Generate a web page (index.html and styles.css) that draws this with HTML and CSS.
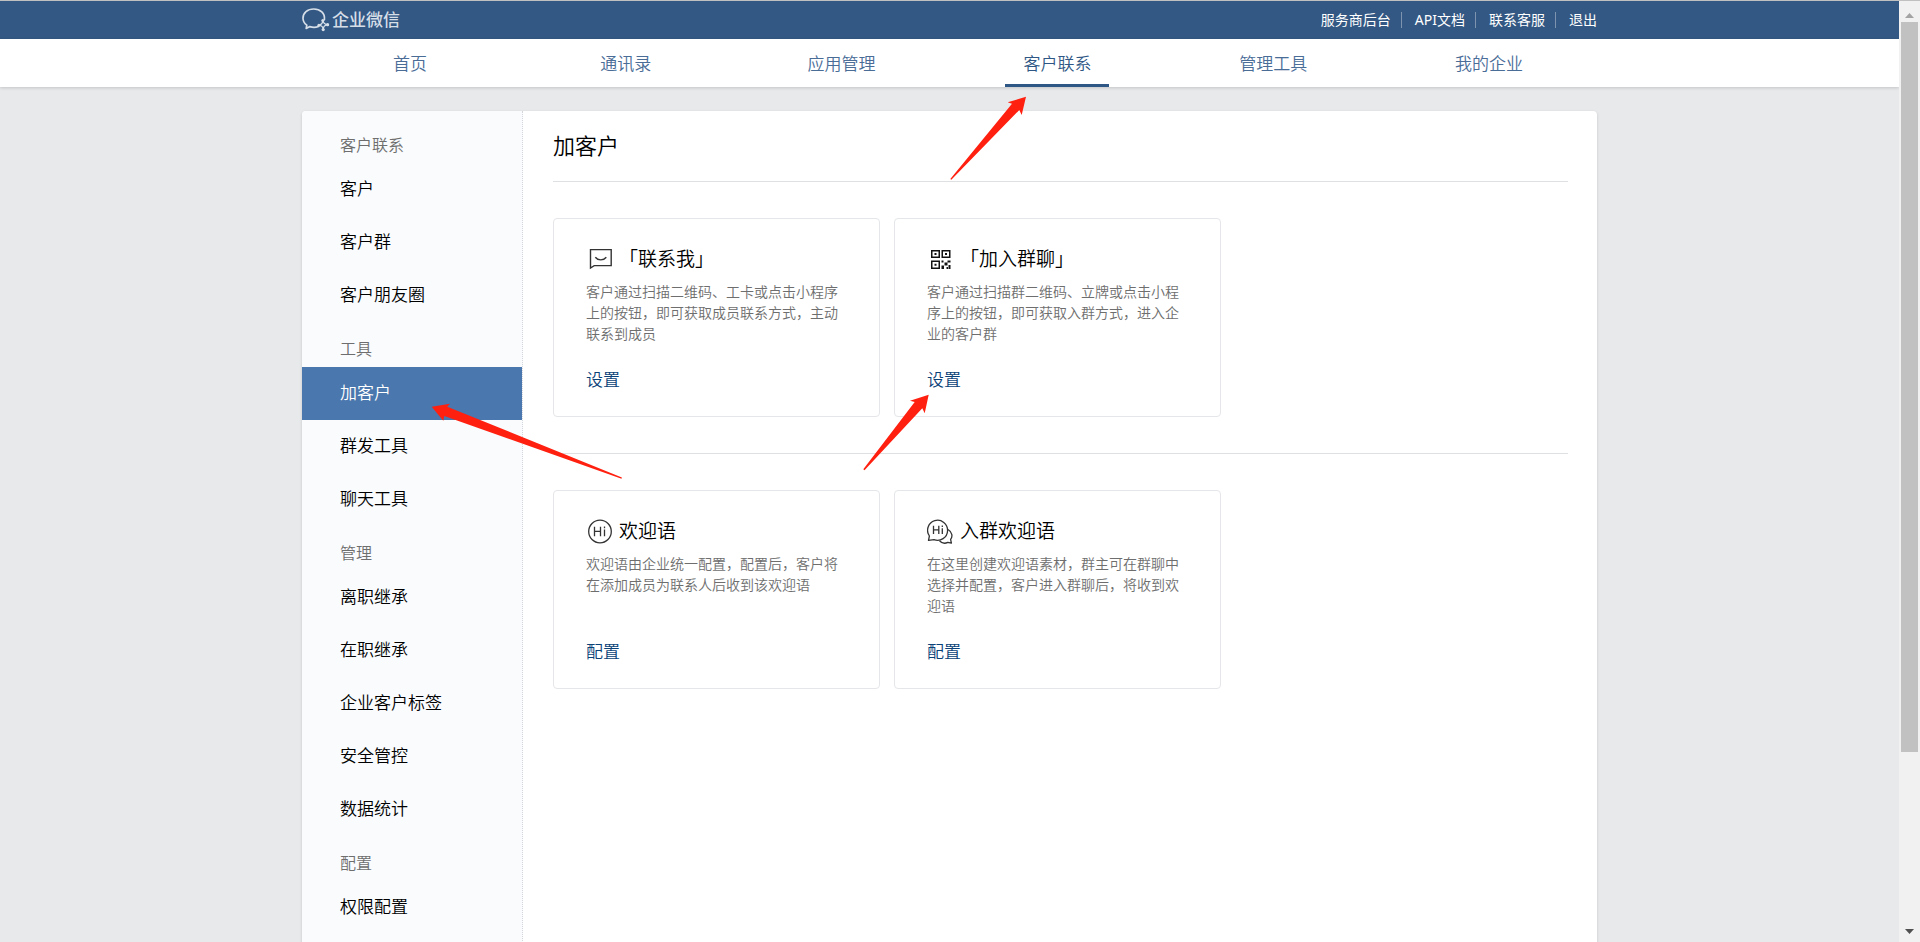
FILE: index.html
```html
<!DOCTYPE html>
<html lang="zh-CN">
<head>
<meta charset="utf-8">
<title>企业微信</title>
<link rel="stylesheet" href="styles.css">
</head>
<body>
<div class="page">
  <header class="topbar">
    <div class="wrap topbar-inner">
      <a class="logo" href="#">
        <svg class="logo-icon" width="28" height="24" viewBox="0 0 28 24" fill="none" stroke="currentColor" stroke-width="1.700" stroke-linecap="round" stroke-linejoin="round" aria-hidden="true">
          <path d="M22.400 11.600C23.200 5.400 18.200 1 11.800 1S1 5 1 10.200c0 3 1.500 5.300 3.800 6.900L4.200 20.500l3.600-1.900c2.800.9 5.900.9 8.700-.1"/>
          <g stroke-width="1.300"><path d="M20.800 12.800c-.2 2.600-1.600 4-4 4.400M25.600 16.700c-2.600-.2-4.200-1.600-4.700-4M21.200 21.400c.1-2.600 1.600-4.200 4.300-4.700M17 17.200c2.500.3 4 1.700 4.300 4.200"/></g>
          <g fill="currentColor" stroke="none"><circle cx="20.800" cy="12.600" r="1.500"/><circle cx="25.600" cy="16.700" r="1.600"/><circle cx="21.200" cy="21.600" r="1.600"/><circle cx="16.900" cy="17.300" r="1.500"/></g>
        </svg>
        <span>企业微信</span>
      </a>
      <nav class="top-links">
        <a href="#">服务商后台</a>
        <a href="#">API文档</a>
        <a href="#">联系客服</a>
        <a href="#">退出</a>
      </nav>
    </div>
  </header>

  <nav class="mainnav">
    <ul class="wrap mainnav-list">
      <li><a href="#">首页</a></li>
      <li><a href="#">通讯录</a></li>
      <li><a href="#">应用管理</a></li>
      <li><a class="active" href="#">客户联系</a></li>
      <li><a href="#">管理工具</a></li>
      <li><a href="#">我的企业</a></li>
    </ul>
  </nav>

  <div class="wrap panel">
    <aside class="sidebar">
      <h2>客户联系</h2>
      <a href="#">客户</a>
      <a href="#">客户群</a>
      <a href="#">客户朋友圈</a>
      <h2>工具</h2>
      <a class="active" href="#">加客户</a>
      <a href="#">群发工具</a>
      <a href="#">聊天工具</a>
      <h2>管理</h2>
      <a href="#">离职继承</a>
      <a href="#">在职继承</a>
      <a href="#">企业客户标签</a>
      <a href="#">安全管控</a>
      <a href="#">数据统计</a>
      <h2>配置</h2>
      <a href="#">权限配置</a>
    </aside>

    <main class="content">
      <h1>加客户</h1>
      <section class="cards">
        <article class="card">
          <h3>
            <svg width="28" height="28" viewBox="0 0 28 28" fill="none" stroke="#333" stroke-width="1.400" aria-hidden="true">
              <path d="M4.500 23V4.600h20.700v16H8.200z"/>
              <path d="M9.300 12.300c2.600 3.400 8.300 3.400 11 0"/>
            </svg>
            <span>「联系我」</span>
          </h3>
          <p>客户通过扫描二维码、工卡或点击小程序上的按钮，即可获取成员联系方式，主动联系到成员</p>
          <a href="#">设置</a>
        </article>
        <article class="card">
          <h3>
            <svg width="28" height="28" viewBox="0 0 28 28" fill="#111" aria-hidden="true">
              <path fill-rule="evenodd" d="M4 5h9v8H4zM5.500 6.500v5h6v-5zM14.500 5h9v8h-9zM16 6.500v5h6v-5zM4 15.500h9v8.500H4zM5.500 17v5.500h6V17z"/>
              <path d="M7.500 8h2v2h-2zM18 8h2v2h-2zM7.500 18.700h2v2h-2zM14.500 15.500h2v2h-2zM20.500 15.500h3v2h-3zM17.500 17.500h3v3h-3zM14.500 20.500h2.500v3.500h-2.500zM19.500 22h1.500v2h-1.500zM21.500 20h2v4h-2z"/>
            </svg>
            <span>「加入群聊」</span>
          </h3>
          <p>客户通过扫描群二维码、立牌或点击小程序上的按钮，即可获取入群方式，进入企业的客户群</p>
          <a href="#">设置</a>
        </article>
      </section>

      <section class="cards">
        <article class="card">
          <h3>
            <svg width="28" height="28" viewBox="0 0 28 28" fill="none" stroke="#333" stroke-width="1.300" aria-hidden="true">
              <circle cx="14" cy="14.500" r="11.300"/>
              <path d="M8.500 9.800v9.400M14.500 9.800v9.400M8.500 14.300h6M18.500 12.600v6.600M18.500 9.600v1.600"/>
            </svg>
            <span>欢迎语</span>
          </h3>
          <p>欢迎语由企业统一配置，配置后，客户将在添加成员为联系人后收到该欢迎语</p>
          <a href="#">配置</a>
        </article>
        <article class="card">
          <h3>
            <svg width="28" height="28" viewBox="0 0 28 28" fill="none" stroke="#333" stroke-width="1.300" stroke-linejoin="round" aria-hidden="true">
              <path d="M2.400 19A10 10 0 1 1 7 22.600l-5.500.7z"/>
              <path d="M21 12.500c4.300 2.500 4.900 7 2.600 9.900l.8 3.800-3.600-.8c-2.600 1.300-6.100.8-8.300-1.600"/>
              <path d="M6.500 8.800v8.200M11.800 8.800V17M6.500 12.800h5.300M15.300 11.300V17M15.300 8.500V10"/>
            </svg>
            <span>入群欢迎语</span>
          </h3>
          <p>在这里创建欢迎语素材，群主可在群聊中选择并配置，客户进入群聊后，将收到欢迎语</p>
          <a href="#">配置</a>
        </article>
      </section>
    </main>

    <svg class="arrows" width="780" height="400" viewBox="302 87 780 400" fill="#ff2010" aria-hidden="true">
      <path d="M1026 96.700l-18.300 5.600 4.300 1.400-61.700 75.200 1 .8 68-69.700 2.400 5z"/>
      <path d="M431.700 406.700l18.300-3-2.700 3 174.600 70.800-.4 1.200-177.200-62.700-1 4.700z"/>
      <path d="M928.700 394.700l-18.700 6 4.700 1.300-51.400 67.300 1.200 1 57.800-62 2.400 5z"/>
    </svg>
  </div>
</div>

<div class="scrollbar" aria-hidden="true">
  <svg width="21" height="21" viewBox="0 0 21 21"><path fill="#a3a3a3" d="M6 17h9l-4.500-5z"/></svg>
  <div class="scroll-track"><div class="scroll-thumb"></div></div>
  <svg width="21" height="21" viewBox="0 0 21 21"><path fill="#505050" d="M6 8h9l-4.500 5z"/></svg>
</div>
</body>
</html>
```

FILE: styles.css
```css
* {
  box-sizing: border-box;
}

body {
  margin: 0;
  display: flex;
  height: 100vh;
  overflow: hidden;
  border-top: 1px solid #c0c0c0;
  background: #e8e9eb;
  color: #000;
  font-family: "Noto Sans", "Noto Sans CJK SC", sans-serif;
  font-size: 17px;
  font-weight: 350;
}

a {
  color: inherit;
  text-decoration: none;
}

h1, h2, h3, p, ul {
  margin: 0;
  padding: 0;
  font-weight: 350;
}

.page {
  flex: 1;
  min-width: 0;
  overflow: hidden;
}

.wrap {
  width: 100%;
  max-width: 1295px;
  margin: 0 auto;
}

/* Top bar */
.topbar {
  background: #335883;
  color: #fff;
}

.topbar-inner {
  display: flex;
  justify-content: space-between;
  align-items: center;
  height: 38px;
}

.logo {
  display: flex;
  align-items: center;
  gap: 2px;
  color: #d6dee8;
  font-weight: 500;
  line-height: 24px;
}

.top-links {
  display: flex;
  align-items: center;
  font-size: 14px;
  font-weight: 400;
  line-height: 16px;
}

.top-links a + a {
  margin-left: 10px;
  padding-left: 13px;
  border-left: 1px solid #7d93ae;
}

/* Main navigation */
.mainnav {
  position: relative;
  background: #fff;
  box-shadow: 0 1px 3px rgba(0, 0, 0, 0.16);
}

.mainnav-list {
  display: grid;
  grid-template-columns: repeat(6, 1fr);
  justify-items: center;
  list-style: none;
}

.mainnav a {
  display: block;
  min-width: 104px;
  height: 48px;
  border-bottom: 3px solid transparent;
  color: #4a6d98;
  line-height: 49px;
  text-align: center;
}

.mainnav a.active {
  border-color: #2f5785;
  color: #2f5785;
}

/* Panel */
.panel {
  position: relative;
  display: flex;
  min-height: 100vh;
  margin-top: 24px;
  border-radius: 4px;
  background: #fff;
  box-shadow: 0 1px 3px rgba(0, 0, 0, 0.16);
}

.sidebar {
  flex: 0 0 221px;
  padding-top: 7px;
  border-right: 1px dotted #d3d6da;
  border-radius: 4px 0 0 4px;
  background: #f9fbfd;
}

.sidebar h2 {
  height: 45px;
  padding: 9px 38px 0;
  color: #6e6e6e;
  font-size: 16px;
  line-height: 36px;
}

.sidebar a {
  display: block;
  padding: 0 38px 2px;
  line-height: 51px;
}

.sidebar a.active {
  background: #4a77ad;
  color: #fff;
}

.content {
  flex: 1;
  min-width: 0;
  padding: 0 29px 0 30px;
}

.content h1 {
  padding-bottom: 2px;
  font-size: 22px;
  line-height: 68px;
}

.cards {
  display: grid;
  grid-template-columns: repeat(auto-fill, 327px);
  gap: 14px;
  padding: 36px 0;
  border-top: 1px solid #dfe0e2;
}

.card {
  padding: 26px 32px 22px;
  border: 1px solid #e4e6e9;
  border-radius: 4px;
}

.card h3 {
  display: flex;
  align-items: center;
  gap: 5px;
  font-size: 19px;
  line-height: 28px;
}

.card p {
  min-height: 63px;
  margin: 8px 0 22px;
  color: #6e6e6e;
  font-size: 14px;
  line-height: 21px;
}

.card a {
  display: inline-block;
  color: #0a4278;
  line-height: 28px;
}

.arrows {
  position: absolute;
  top: -24px;
  left: 0;
  pointer-events: none;
}

/* Window scroll bar */
.scrollbar {
  display: flex;
  flex: 0 0 21px;
  flex-direction: column;
  background: #f1f1f1;
}

.scroll-track {
  flex: 1;
  padding: 0 2px;
}

.scroll-thumb {
  height: 81.2%;
  background: #c1c1c1;
}
```
